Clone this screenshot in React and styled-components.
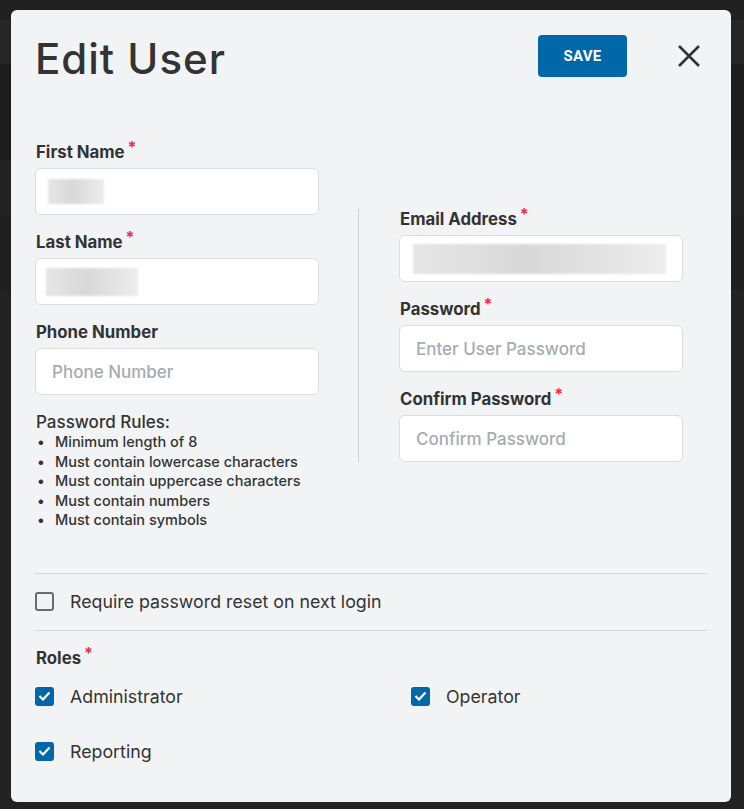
import styled, { createGlobalStyle } from 'styled-components';

const Global = createGlobalStyle`
  html, body {
    margin: 0;
    padding: 0;
    background: #212121;
    font-family: Inter, "Open Sans", Arial, sans-serif;
  }
  * { box-sizing: border-box; }
`

const Page = styled.div`
  min-height: 809px;
  padding: 10px 13px 0 11px;
  background:
    linear-gradient(#212121 0 20px, #262626 20px 64px, #1c1c1c 64px 160px, #222 160px 216px, #1f1f1f 216px 290px, #222 290px);
`

const Modal = styled.div`
  width: 720px;
  height: 792px;
  background: #f2f3f5;
  border-radius: 6px;
  padding: 24px 24px;
  color: #333;
`

const Header = styled.div`
  display: flex;
  align-items: center;
  justify-content: space-between;
  height: 44px;
  margin-bottom: 64px;
`

const Title = styled.h1`
  margin: 0;
  font-size: 42px;
  font-weight: 500;
  letter-spacing: 1px;
  color: #333;
  padding-top: 4px;
`

const Actions = styled.div`
  display: flex;
  align-items: center;
  gap: 50px;
  padding-right: 6px;
`

const SaveButton = styled.button`
  width: 89px;
  height: 42px;
  border: none;
  border-radius: 4px;
  background: #0067a9;
  color: #fff;
  font-family: Roboto, Arial, sans-serif;
  font-weight: 700;
  font-size: 15px;
  letter-spacing: 0.2px;
  cursor: pointer;
`

const CloseButton = styled.button`
  border: none;
  background: none;
  padding: 0;
  width: 24px;
  height: 24px;
  display: flex;
  cursor: pointer;
`

const Form = styled.div`
  display: grid;
  grid-template-columns: 284px 1fr;
  align-items: center;
`

const Column = styled.div`
  display: flex;
  flex-direction: column;
`

const RightColumn = styled(Column)`
  margin-left: 39px;
  padding-left: 40px;
  border-left: 1px solid #cfcfcf;
  width: 365px;
`

const Field = styled.div`
  display: flex;
  flex-direction: column;
  gap: 6px;
  margin-bottom: 17px;
  &:last-child { margin-bottom: 0; }
`

const Label = styled.label`
  font-size: 16.8px;
  line-height: 20px;
  font-weight: 700;
  color: #333;
  padding-left: 1px;
`

const Required = styled.span`
  color: #ee2b3b;
  font-size: 16px;
  vertical-align: 5px;
  margin-left: 3px;
  line-height: 0;
`

const Input = styled.div`
  height: 47px;
  width: 284px;
  background: #fff;
  border: 1px solid #dcdcdc;
  border-radius: 6px;
  padding: 0 16px;
  display: flex;
  align-items: center;
  font-size: 17px;
  font-weight: 500;
  color: #a4acb3;
`

const Blur = styled.div`
  width: ${p => p.$w}px;
  height: ${p => p.$h}px;
  margin-left: ${p => p.$x}px;
  background: linear-gradient(90deg, #e6e6e6, #d8d8d8 45%, #ededed);
  filter: blur(1px);
`

const Rules = styled.div`
  color: #333;
  padding-left: 1px;
`

const RulesTitle = styled.div`
  font-size: 17px;
  line-height: 20px;
  font-weight: 500;
`

const RuleList = styled.ul`
  margin: 0;
  padding: 0;
  list-style: none;
`

const Rule = styled.li`
  font-size: 14.5px;
  line-height: 19.5px;
  font-weight: 500;
  position: relative;
  padding-left: 19px;
  &::before {
    content: '•';
    position: absolute;
    left: 1px;
  }
`

const Divider = styled.hr`
  border: none;
  border-top: 1px solid #d6d6d6;
  margin: 0;
`

const ResetRow = styled.div`
  height: 56px;
  display: flex;
  align-items: center;
`

const CheckRow = styled.label`
  display: flex;
  align-items: center;
  gap: 16px;
  font-size: 17.8px;
  color: #333;
`

const Box = styled.span`
  width: 19px;
  height: 19px;
  border-radius: 3px;
  display: flex;
  align-items: center;
  justify-content: center;
  background: ${p => (p.$checked ? '#0067a9' : 'transparent')};
  border: ${p => (p.$checked ? 'none' : '2px solid #6b6b6b')};
`

const RolesSection = styled.div`
  padding-top: 17px;
`

const RolesGrid = styled.div`
  display: grid;
  grid-template-columns: 376px 1fr;
  row-gap: 34px;
  margin-top: 18px;
`

function Checkbox({ checked, children }) {
  return (
    <CheckRow>
      <Box $checked={checked}>
        {checked && (
          <svg width="13" height="10" viewBox="0 0 13 10">
            <path d="M1.5 5l3.5 3.5L11.5 1.5" fill="none" stroke="#fff" strokeWidth="2.2" />
          </svg>
        )}
      </Box>
      {children}
    </CheckRow>
  )
}

const rules = [
  'Minimum length of 8',
  'Must contain lowercase characters',
  'Must contain uppercase characters',
  'Must contain numbers',
  'Must contain symbols',
]

export default function App() {
  return (
    <Page>
      <Global />
      <Modal>
        <Header>
          <Title>Edit User</Title>
          <Actions>
            <SaveButton>SAVE</SaveButton>
            <CloseButton aria-label="Close">
              <svg width="24" height="24" viewBox="0 0 24 24">
                <path d="M2 2l20 20M22 2L2 22" stroke="#333" strokeWidth="2.6" fill="none" />
              </svg>
            </CloseButton>
          </Actions>
        </Header>

        <Form>
          <Column>
            <Field>
              <Label>First Name<Required>*</Required></Label>
              <Input><Blur $w={56} $h={25} $x={-4} /></Input>
            </Field>
            <Field>
              <Label>Last Name<Required>*</Required></Label>
              <Input><Blur $w={92} $h={28} $x={-6} /></Input>
            </Field>
            <Field>
              <Label>Phone Number</Label>
              <Input>Phone Number</Input>
            </Field>
            <Rules>
              <RulesTitle>Password Rules:</RulesTitle>
              <RuleList>
                {rules.map(r => <Rule key={r}>{r}</Rule>)}
              </RuleList>
            </Rules>
          </Column>

          <RightColumn>
            <Field>
              <Label>Email Address<Required>*</Required></Label>
              <Input><Blur $w={261} $h={30} $x={-3} /></Input>
            </Field>
            <Field>
              <Label>Password<Required>*</Required></Label>
              <Input>Enter User Password</Input>
            </Field>
            <Field>
              <Label>Confirm Password<Required>*</Required></Label>
              <Input>Confirm Password</Input>
            </Field>
          </RightColumn>
        </Form>

        <Divider style={{ marginTop: 43 }} />
        <ResetRow>
          <Checkbox>Require password reset on next login</Checkbox>
        </ResetRow>
        <Divider />

        <RolesSection>
          <Label>Roles<Required>*</Required></Label>
          <RolesGrid>
            <Checkbox checked>Administrator</Checkbox>
            <Checkbox checked>Operator</Checkbox>
            <Checkbox checked>Reporting</Checkbox>
          </RolesGrid>
        </RolesSection>
      </Modal>
    </Page>
  )
}
